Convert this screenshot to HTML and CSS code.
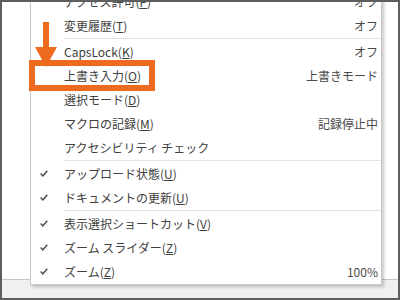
FILE: index.html
```html
<!DOCTYPE html>
<html lang="ja">
<head>
    <meta charset="UTF-8">
    <title>ステータスバーのユーザー設定</title>
    <link rel="stylesheet" href="styles.css">
</head>
<body>
    <div class="screen">
        <div class="doc"></div>
        <div class="status-bar"></div>

        <div class="menu">
            <div class="item"><span class="check"></span><span class="label">アクセス許可(<u>P</u>)</span><span class="value">オフ</span></div>
            <div class="item"><span class="check"></span><span class="label">変更履歴(<u>T</u>)</span><span class="value">オフ</span></div>
            <div class="sep"></div>
            <div class="item"><span class="check"></span><span class="label">CapsLock(<u>K</u>)</span><span class="value">オフ</span></div>
            <div class="item"><span class="check"></span><span class="label">上書き入力(<u>O</u>)</span><span class="value">上書きモード</span></div>
            <div class="item"><span class="check"></span><span class="label">選択モード(<u>D</u>)</span><span class="value"></span></div>
            <div class="item"><span class="check"></span><span class="label">マクロの記録(<u>M</u>)</span><span class="value">記録停止中</span></div>
            <div class="item"><span class="check"></span><span class="label">アクセシビリティ チェック</span><span class="value"></span></div>
            <div class="sep"></div>
            <div class="item"><span class="check"><svg width="8" height="7" viewBox="0 0 8 7"><polyline points="0.7,3.6 2.8,5.9 7.3,0.8"/></svg></span><span class="label">アップロード状態(<u>U</u>)</span><span class="value"></span></div>
            <div class="item"><span class="check"><svg width="8" height="7" viewBox="0 0 8 7"><polyline points="0.7,3.6 2.8,5.9 7.3,0.8"/></svg></span><span class="label">ドキュメントの更新(<u>U</u>)</span><span class="value"></span></div>
            <div class="sep"></div>
            <div class="item"><span class="check"><svg width="8" height="7" viewBox="0 0 8 7"><polyline points="0.7,3.6 2.8,5.9 7.3,0.8"/></svg></span><span class="label">表示選択ショートカット(<u>V</u>)</span><span class="value"></span></div>
            <div class="item"><span class="check"><svg width="8" height="7" viewBox="0 0 8 7"><polyline points="0.7,3.6 2.8,5.9 7.3,0.8"/></svg></span><span class="label">ズーム スライダー(<u>Z</u>)</span><span class="value"></span></div>
            <div class="item"><span class="check"><svg width="8" height="7" viewBox="0 0 8 7"><polyline points="0.7,3.6 2.8,5.9 7.3,0.8"/></svg></span><span class="label">ズーム(<u>Z</u>)</span><span class="value">100%</span></div>
        </div>

        <!-- annotation -->
        <div class="highlight"></div>
        <svg class="arrow" width="24" height="46" viewBox="0 0 24 46">
            <rect x="9" y="0" width="6" height="26"/>
            <polygon points="1,25 23,25 12,45"/>
        </svg>
    </div>
</body>
</html>
```

FILE: styles.css
```css
body {
    margin: 0;
    font-family: "Noto Sans CJK JP", "Noto Sans", sans-serif;
}
.screen {
    position: relative;
    width: 400px;
    height: 300px;
    box-sizing: border-box;
    border: 2px solid #5e5e5e;
    background-color: #fff;
    display: flex;
    flex-direction: column;
    overflow: hidden;
}
.doc {
    flex: 1;
    background-color: #fff;
}
.status-bar {
    height: 18px;
    background-color: #f0f0f0;
    border-top: 1px solid #c6c6c6;
}
.menu {
    position: absolute;
    left: 28px;
    top: -16px;
    width: 352px;
    box-sizing: border-box;
    padding: 2px 0 1px;
    background-color: #fff;
    border: 1px solid #c8c8c8;
    box-shadow: 2px 2px 3px rgba(0, 0, 0, 0.22);
    font-size: 12px;
    color: #404040;
}
.item {
    display: flex;
    align-items: center;
    height: 24px;
    white-space: nowrap;
}
.check {
    width: 33px;
    flex-shrink: 0;
    display: flex;
    align-items: center;
    padding-left: 9px;
    box-sizing: border-box;
}
.check svg polyline {
    fill: none;
    stroke: #4a4a4a;
    stroke-width: 1.5;
}
.label {
    flex: 1;
}
.label u {
    text-underline-offset: 1px;
}
.value {
    padding-right: 3px;
    color: #4a4a4a;
}
.sep {
    height: 1px;
    margin: 1px 0 0 33px;
    background-color: #e2e2e2;
}
.highlight {
    position: absolute;
    left: 27px;
    top: 58px;
    width: 126px;
    height: 31px;
    box-sizing: border-box;
    border: 6px solid #ee6a1e;
}
.arrow {
    position: absolute;
    left: 32px;
    top: 20px;
    fill: #ee6a1e;
}
```
